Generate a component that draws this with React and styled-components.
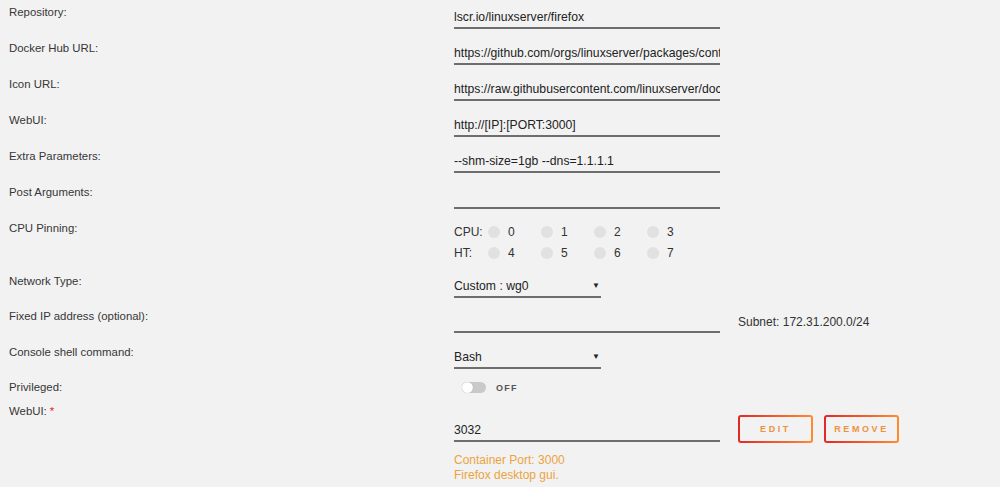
import React from 'react';
import styled, { createGlobalStyle } from 'styled-components';

const GlobalStyle = createGlobalStyle`
  html, body {
    margin: 0;
    padding: 0;
    background: #f2f2f2;
  }
  body {
    font-family: "Liberation Sans", Arial, sans-serif;
    font-size: 12px;
    color: #333;
  }
`;

const Page = styled.div`
  width: 1000px;
  height: 487px;
  overflow: hidden;
  background: #f2f2f2;
`;

const Row = styled.div`
  display: grid;
  grid-template-columns: 454px 1fr;
  min-height: ${(p) => p.$h || 36}px;
`;

const Label = styled.div`
  padding: 4px 0 0 9px;
  line-height: 16px;
  font-size: 11.4px;
  color: #363636;
`;

const Required = styled.span`
  color: #e22828;
  margin-left: 3px;
`;

const Field = styled.div`
  display: flex;
  align-items: flex-start;
  gap: 18px;
`;

const Input = styled.div`
  width: 266px;
  height: 22px;
  margin-top: 7px;
  box-sizing: border-box;
  border-bottom: 2px solid #6e6e6e;
  line-height: 20px;
  font-size: 12.2px;
  color: #222;
  white-space: nowrap;
  overflow: hidden;
`;

const Select = styled(Input)`
  width: 147px;
  display: flex;
  justify-content: space-between;
  align-items: center;
  padding-right: 1px;
`;

const Arrow = styled.span`
  font-size: 8px;
  color: #222;
`;

const Side = styled.span`
  margin-top: 11px;
  font-size: 12px;
  color: #333;
`;

const Pins = styled.div`
  display: grid;
  grid-template-columns: 34px repeat(4, 53px);
  grid-auto-rows: 21px;
  align-items: center;
  padding-top: 5px;
  font-size: 12px;
  color: #333;
`;

const Pin = styled.span`
  display: flex;
  align-items: center;
  gap: 8px;
`;

const Dot = styled.span`
  width: 12px;
  height: 12px;
  border-radius: 50%;
  background: #e1e1e1;
`;

const Toggle = styled.div`
  display: flex;
  align-items: center;
  align-self: start;
  gap: 10px;
  margin: 7px 0 0 8px;
  font-size: 9px;
  font-weight: bold;
  letter-spacing: 1.3px;
  color: #555;
`;

const Track = styled.span`
  position: relative;
  width: 24px;
  height: 11px;
  border-radius: 6px;
  background: #c9c9c9;
`;

const Knob = styled.span`
  position: absolute;
  left: 0;
  top: 0;
  width: 11px;
  height: 11px;
  border-radius: 50%;
  background: #fff;
  box-shadow: 0 0 1px rgba(0, 0, 0, 0.3);
`;

const PortInput = styled(Input)`
  margin-top: 21px;
`;

const Button = styled.button`
  width: 75px;
  height: 28px;
  margin-top: 16px;
  border: 2px solid transparent;
  border-radius: 3px;
  background:
    linear-gradient(#f2f2f2, #f2f2f2) padding-box,
    linear-gradient(90deg, #e22828, #ff8c2f) border-box;
  font-family: "Liberation Sans", Arial, sans-serif;
  font-size: 9px;
  font-weight: bold;
  letter-spacing: 2.6px;
  color: #f0913f;
  cursor: pointer;
  padding: 0;
  &:not(:first-of-type) {
    margin-left: -7px;
  }
`;

const Help = styled.div`
  padding-top: 10px;
  font-size: 12px;
  line-height: 15px;
  color: #eca33f;
`;

const fields = [
  ['Repository:', 'lscr.io/linuxserver/firefox'],
  ['Docker Hub URL:', 'https://github.com/orgs/linuxserver/packages/container/package/firefox'],
  ['Icon URL:', 'https://raw.githubusercontent.com/linuxserver/docker-templates/master/linuxserver.io/img/firefox-logo.png'],
  ['WebUI:', 'http://[IP]:[PORT:3000]'],
  ['Extra Parameters:', '--shm-size=1gb --dns=1.1.1.1'],
  ['Post Arguments:', ''],
];

function PinRow({ name, cpus }) {
  return (
    <>
      <span>{name}</span>
      {cpus.map((c) => (
        <Pin key={c}>
          <Dot />
          {c}
        </Pin>
      ))}
    </>
  );
}

export default function App() {
  return (
    <Page>
      <GlobalStyle />
      {fields.map(([label, value]) => (
        <Row key={label}>
          <Label>{label}</Label>
          <Field>
            <Input>{value}</Input>
          </Field>
        </Row>
      ))}
      <Row $h={53}>
        <Label>CPU Pinning:</Label>
        <Pins>
          <PinRow name="CPU:" cpus={[0, 1, 2, 3]} />
          <PinRow name="HT:" cpus={[4, 5, 6, 7]} />
        </Pins>
      </Row>
      <Row $h={35}>
        <Label>Network Type:</Label>
        <Field>
          <Select>
            Custom : wg0<Arrow>▼</Arrow>
          </Select>
        </Field>
      </Row>
      <Row>
        <Label>Fixed IP address (optional):</Label>
        <Field>
          <Input />
          <Side>Subnet: 172.31.200.0/24</Side>
        </Field>
      </Row>
      <Row $h={35}>
        <Label>Console shell command:</Label>
        <Field>
          <Select>
            Bash<Arrow>▼</Arrow>
          </Select>
        </Field>
      </Row>
      <Row $h={24}>
        <Label>Privileged:</Label>
        <Toggle>
          <Track>
            <Knob />
          </Track>
          OFF
        </Toggle>
      </Row>
      <Row $h={88}>
        <Label>
          WebUI:<Required>*</Required>
        </Label>
        <div>
          <Field>
            <PortInput>3032</PortInput>
            <Button>EDIT</Button>
            <Button>REMOVE</Button>
          </Field>
          <Help>
            Container Port: 3000
            <br />
            Firefox desktop gui.
          </Help>
        </div>
      </Row>
    </Page>
  );
}
